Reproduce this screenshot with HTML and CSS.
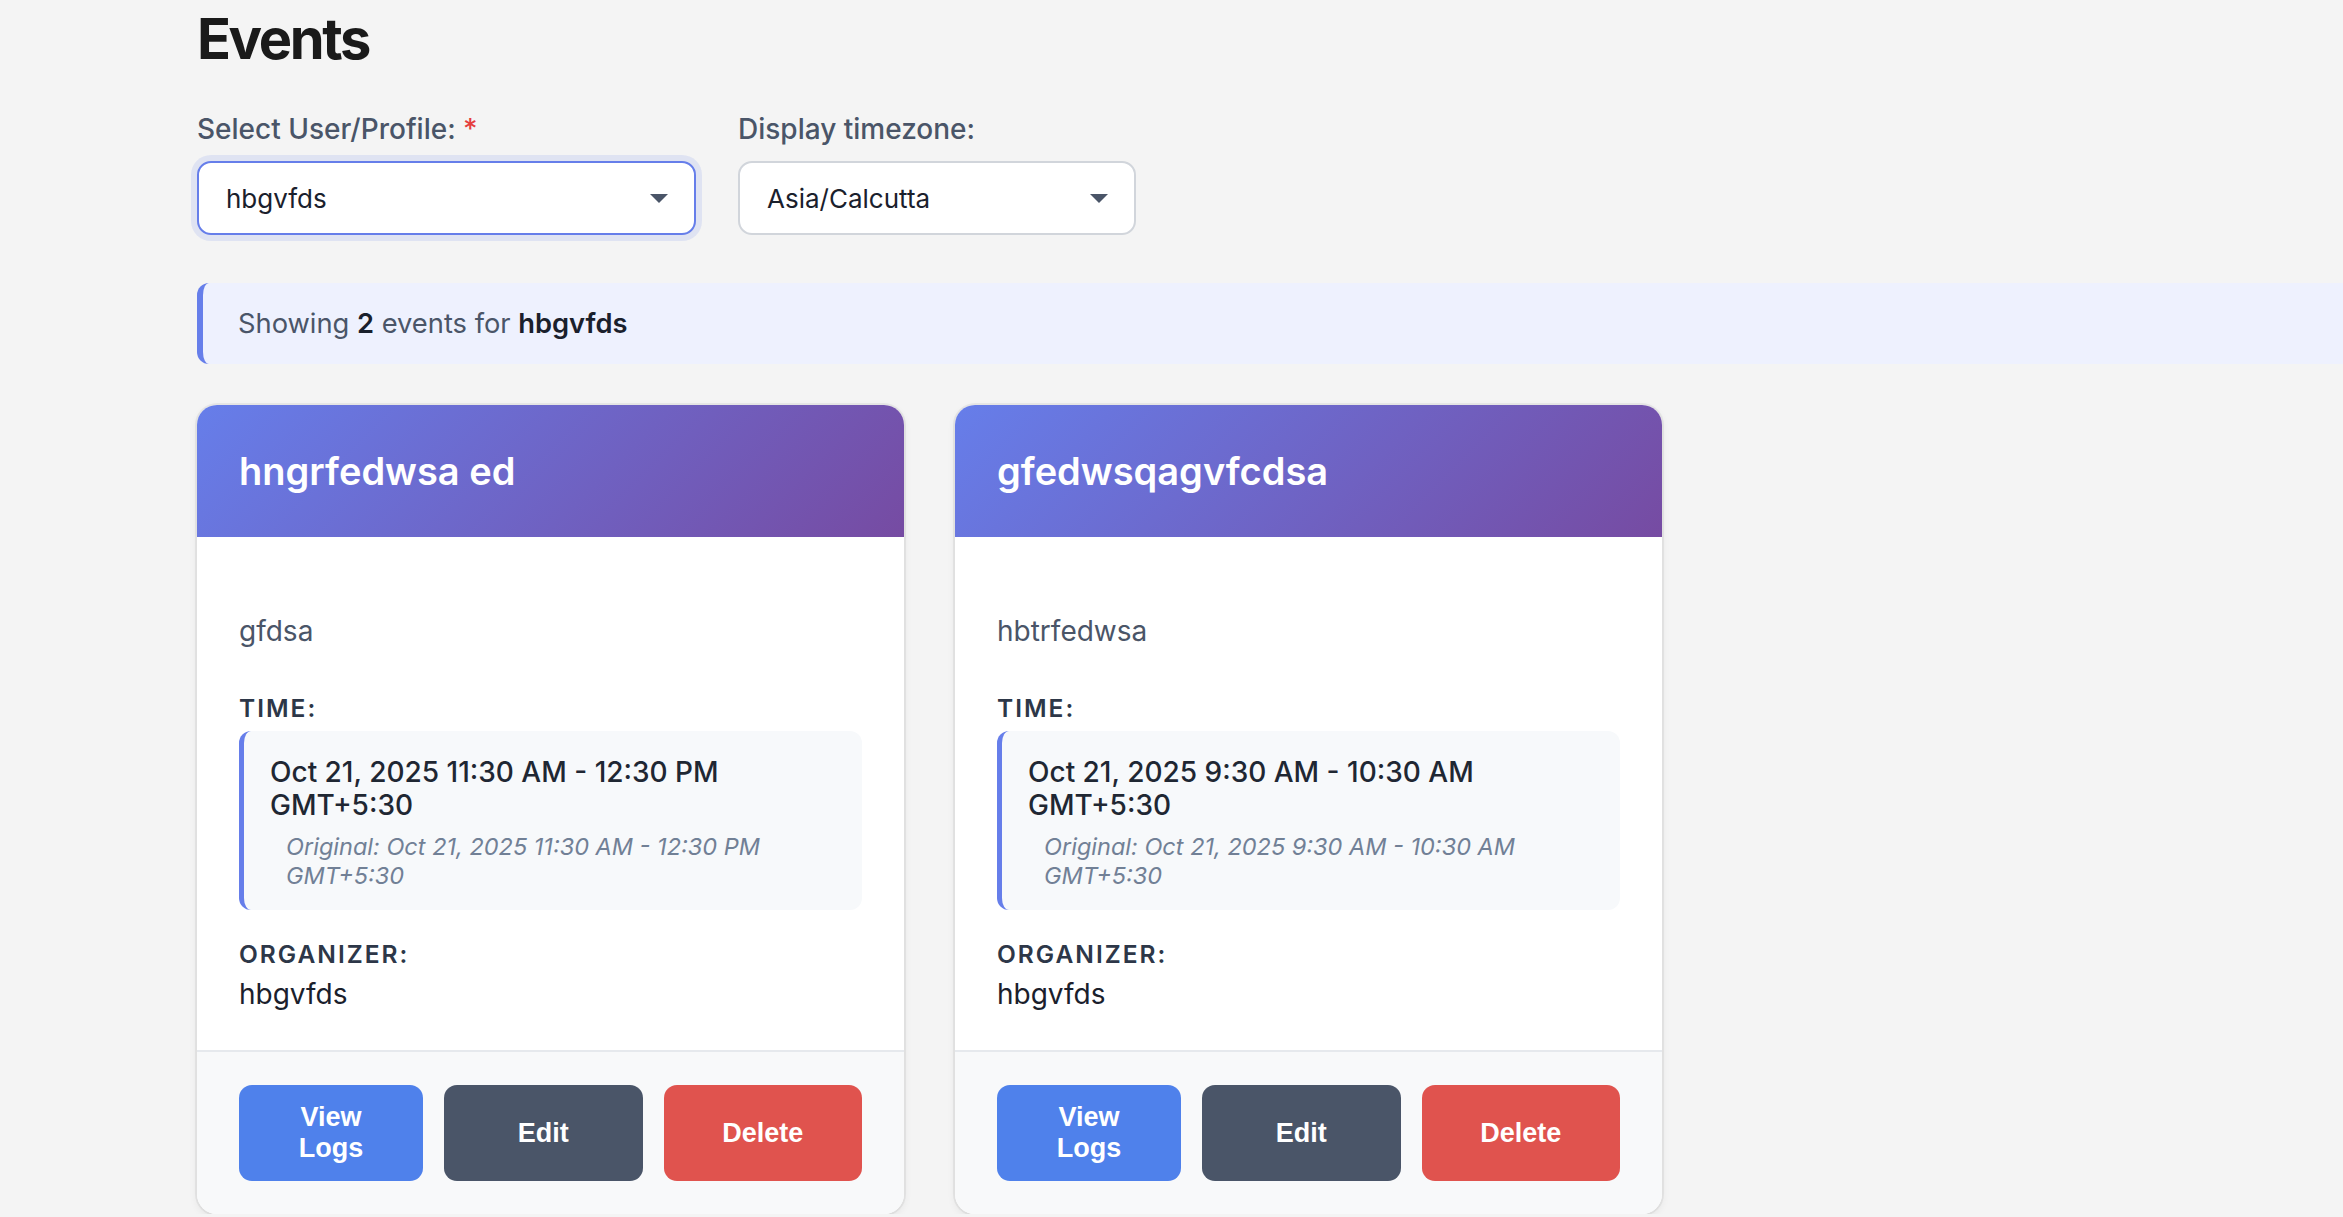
FILE: index.html
```html
<!DOCTYPE html>
<html lang="en">
<head>
<meta charset="utf-8">
<title>Events</title>
<link rel="stylesheet" href="styles.css">
</head>
<body>
<div class="page">
  <h1 class="title">Events</h1>

  <div class="filters">
    <div class="field">
      <label class="label">Select User/Profile: <span class="req">*</span></label>
      <div class="select select-user focused">
        <span class="select-value">hbgvfds</span>
        <span class="caret"></span>
      </div>
    </div>
    <div class="field">
      <label class="label">Display timezone:</label>
      <div class="select select-tz">
        <span class="select-value">Asia/Calcutta</span>
        <span class="caret"></span>
      </div>
    </div>
  </div>

  <div class="info">Showing <strong>2</strong> events for <strong>hbgvfds</strong></div>

  <div class="cards">
    <div class="card">
      <div class="card-head"><h3 class="card-title">hngrfedwsa ed</h3></div>
      <div class="card-body">
        <p class="desc">gfdsa</p>
        <div class="meta-label">Time:</div>
        <div class="time-box">
          <div class="time-main">Oct 21, 2025 11:30 AM - 12:30 PM GMT+5:30</div>
          <div class="time-orig">Original: Oct 21, 2025 11:30 AM - 12:30 PM GMT+5:30</div>
        </div>
        <div class="meta-label org">Organizer:</div>
        <div class="meta-value">hbgvfds</div>
      </div>
      <div class="card-foot">
        <button class="btn btn-logs">View Logs</button>
        <button class="btn btn-edit">Edit</button>
        <button class="btn btn-delete">Delete</button>
      </div>
    </div>

    <div class="card">
      <div class="card-head"><h3 class="card-title">gfedwsqagvfcdsa</h3></div>
      <div class="card-body">
        <p class="desc">hbtrfedwsa</p>
        <div class="meta-label">Time:</div>
        <div class="time-box">
          <div class="time-main">Oct 21, 2025 9:30 AM - 10:30 AM GMT+5:30</div>
          <div class="time-orig">Original: Oct 21, 2025 9:30 AM - 10:30 AM GMT+5:30</div>
        </div>
        <div class="meta-label org">Organizer:</div>
        <div class="meta-value">hbgvfds</div>
      </div>
      <div class="card-foot">
        <button class="btn btn-logs">View Logs</button>
        <button class="btn btn-edit">Edit</button>
        <button class="btn btn-delete">Delete</button>
      </div>
    </div>
  </div>
</div>
</body>
</html>
```

FILE: styles.css
```css
html, body {
  margin: 0;
  padding: 0;
  background: #f4f4f4;
  font-family: "Inter", "Noto Sans", sans-serif;
  color: #1a202c;
  overflow: hidden;
}

.page {
  padding: 0 0 0 197px;
}

.title {
  margin: 0;
  padding-top: 6px;
  font-size: 56px;
  line-height: 67px;
  font-weight: 700;
  letter-spacing: -2.4px;
  color: #1a1a1a;
}

.filters {
  display: flex;
  gap: 42px;
  margin-top: 35px;
}

.field {
  display: flex;
  flex-direction: column;
}

.label {
  font-size: 28px;
  line-height: 42px;
  font-weight: 500;
  color: #4a5568;
  margin-bottom: 11px;
}

.req {
  color: #e53e3e;
}

.select {
  box-sizing: border-box;
  height: 74px;
  display: flex;
  align-items: center;
  justify-content: space-between;
  padding: 0 26px 0 27px;
  background: #fff;
  border: 2px solid #d1d5db;
  border-radius: 14px;
  font-size: 26px;
  color: #1a202c;
}

.select-user { width: 499px; }
.select-tz { width: 398px; }

.select.focused {
  border-color: #667eea;
  box-shadow: 0 0 0 6px rgba(102, 126, 234, 0.14);
}

.caret {
  width: 0;
  height: 0;
  border-left: 9px solid transparent;
  border-right: 9px solid transparent;
  border-top: 9px solid #4a5568;
}

.info {
  margin-top: 48px;
  box-sizing: border-box;
  height: 81px;
  display: flex;
  align-items: center;
  gap: 0.28em;
  padding: 0 35px;
  background: #eef1fe;
  border-left: 6px solid #667eea;
  border-radius: 12px 0 0 12px;
  font-size: 27.3px;
  color: #4a5568;
}

.info strong {
  color: #1a202c;
  font-weight: 600;
}

.cards {
  display: grid;
  grid-template-columns: repeat(2, 707px);
  gap: 51px;
  margin-top: 41px;
  align-items: start;
}

.card {
  background: #fff;
  border-radius: 20px;
  overflow: hidden;
  box-shadow: 0 0 0 2px rgba(0, 0, 0, 0.05), 0 3px 8px rgba(0, 0, 0, 0.07);
}

.card-head {
  background: linear-gradient(135deg, #667eea 0%, #764ba2 100%);
  padding: 43px 42px 42px;
}

.card-title {
  margin: 0;
  font-size: 38px;
  line-height: 47px;
  font-weight: 600;
  color: #fff;
}

.card-body {
  padding: 42px 42px 35px;
}

.desc {
  margin: 31px 0 38px;
  font-size: 28px;
  line-height: 42px;
  color: #4a5568;
}

.meta-label {
  font-size: 24.5px;
  line-height: 37px;
  font-weight: 600;
  text-transform: uppercase;
  letter-spacing: 2px;
  color: #2d3748;
  margin-bottom: 4px;
}

.meta-label.org {
  margin-top: 26px;
  margin-bottom: 0;
}

.time-box {
  background: #f7f9fb;
  border-left: 5px solid #667eea;
  border-radius: 12px;
  padding: 25px 26px 20px;
}

.time-main {
  font-size: 28px;
  line-height: 33px;
  font-weight: 500;
  color: #1f2733;
}

.time-orig {
  margin: 10px 0 0 16px;
  font-size: 23.5px;
  line-height: 29px;
  font-style: italic;
  color: #718096;
}

.meta-value {
  font-size: 28px;
  line-height: 42px;
  color: #1a202c;
}

.card-foot {
  display: flex;
  gap: 21px;
  padding: 33px 42px;
  background: #f8f9fa;
  border-top: 2px solid #e6e9ed;
}

.btn {
  flex: 1 1 0;
  height: 96px;
  border: none;
  border-radius: 13px;
  padding: 0 28px;
  font-family: "Liberation Sans", Arial, sans-serif;
  font-size: 27px;
  line-height: 31px;
  font-weight: 700;
  color: #fff;
}

.btn-logs {
  flex: 0 0 184px;
  background: #4f81eb;
}

.btn-edit { background: #4a5568; }
.btn-delete { background: #e0534e; }
```
